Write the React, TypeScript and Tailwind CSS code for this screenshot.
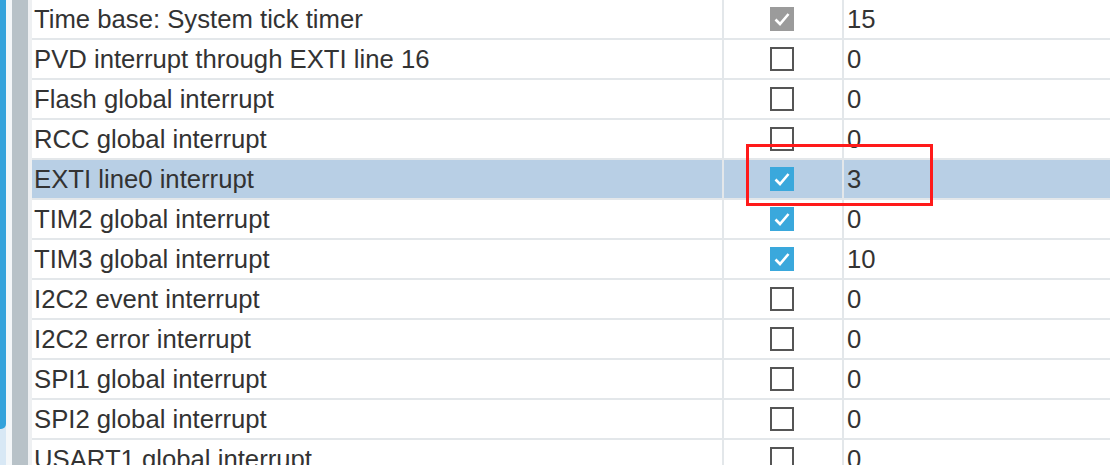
import React from "react"

type Row = {
  name: string
  state: "locked" | "on" | "off"
  priority: string
  selected?: boolean
}

const rows: Row[] = [
  { name: "Time base: System tick timer", state: "locked", priority: "15" },
  { name: "PVD interrupt through EXTI line 16", state: "off", priority: "0" },
  { name: "Flash global interrupt", state: "off", priority: "0" },
  { name: "RCC global interrupt", state: "off", priority: "0" },
  { name: "EXTI line0 interrupt", state: "on", priority: "3", selected: true },
  { name: "TIM2 global interrupt", state: "on", priority: "0" },
  { name: "TIM3 global interrupt", state: "on", priority: "10" },
  { name: "I2C2 event interrupt", state: "off", priority: "0" },
  { name: "I2C2 error interrupt", state: "off", priority: "0" },
  { name: "SPI1 global interrupt", state: "off", priority: "0" },
  { name: "SPI2 global interrupt", state: "off", priority: "0" },
  { name: "USART1 global interrupt", state: "off", priority: "0" },
]

function Check({ state }: { state: Row["state"] }) {
  if (state === "off") {
    return <div className="w-[24px] h-[24px] border-2 border-[#555555] bg-white" />
  }
  return (
    <div
      className={
        state === "on"
          ? "w-[24px] h-[24px] bg-[#3aa8dc] flex items-center justify-center"
          : "w-[24px] h-[24px] bg-[#9b9b9b] flex items-center justify-center"
      }
    >
      <svg width="24" height="24" viewBox="0 0 24 24">
        <path d="M5.5 12.5 L10 17 L18.5 7" fill="none" stroke="white" strokeWidth="2.6" />
      </svg>
    </div>
  )
}

export default function App() {
  return (
    <div
      className="relative flex w-[1110px] h-[465px] overflow-hidden bg-white text-[#333333]"
      style={{ fontFamily: '"Liberation Sans", Arial, sans-serif' }}
    >
      {/* side rails */}
      <div className="flex shrink-0 h-full">
        <div className="w-[6px] h-full flex flex-col bg-[#d8e8f5]">
          <div className="h-[429px] bg-[#34a3dc] rounded-br-[5px]" />
        </div>
        <div className="w-[6px] h-full bg-[#f4f7f9]" />
        <div className="w-[16px] h-full bg-[#b8c2c8]" />
        <div className="w-[4px] h-full bg-[#eef0f2]" />
      </div>

      {/* interrupt table */}
      <div className="flex-1 flex flex-col">
        {rows.map((row) => (
          <div
            key={row.name}
            className={
              row.selected
                ? "flex h-[40px] shrink-0 border-b-2 border-[#e3e7ea] bg-[#b8cfe5]"
                : "flex h-[40px] shrink-0 border-b-2 border-[#e3e7ea]"
            }
          >
            <div className="w-[692px] border-r-2 border-[#e3e7ea] flex items-center pl-[2px] pt-[2px] text-[25.7px] leading-none whitespace-nowrap">
              {row.name}
            </div>
            <div className="w-[120px] border-r-2 border-[#e3e7ea] flex items-center pl-[46px] pb-[1px]">
              <Check state={row.state} />
            </div>
            <div className="flex-1 flex items-center pl-[3px] pt-[2px] text-[25.7px] leading-none">
              {row.priority}
            </div>
          </div>
        ))}
      </div>

      {/* annotation */}
      <div className="absolute left-[746px] top-[144px] w-[187px] h-[62px] border-[3px] border-[#ff1a1a]" />
    </div>
  )
}
